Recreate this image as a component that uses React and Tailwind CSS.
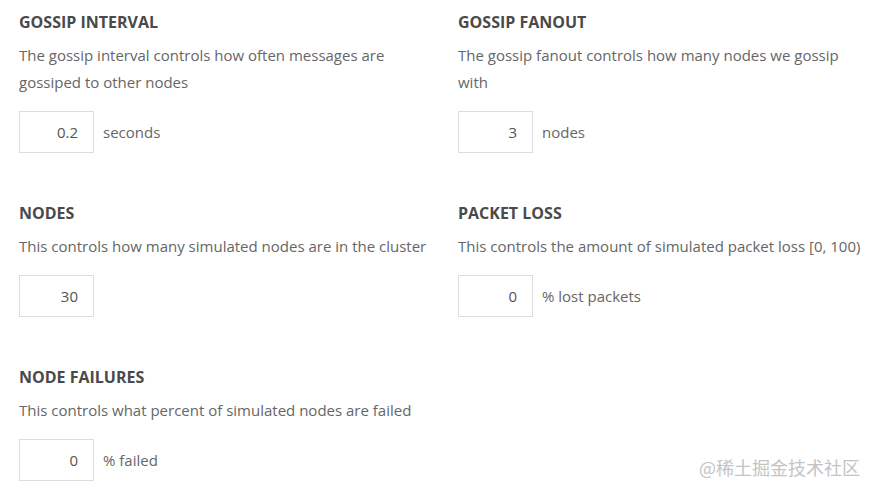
const settings = [
  [
    {
      title: "GOSSIP INTERVAL",
      desc: "The gossip interval controls how often messages are gossiped to other nodes",
      value: "0.2",
      unit: "seconds",
    },
    {
      title: "GOSSIP FANOUT",
      desc: "The gossip fanout controls how many nodes we gossip with",
      value: "3",
      unit: "nodes",
    },
  ],
  [
    {
      title: "NODES",
      desc: "This controls how many simulated nodes are in the cluster",
      value: "30",
      unit: "",
    },
    {
      title: "PACKET LOSS",
      desc: "This controls the amount of simulated packet loss [0, 100)",
      value: "0",
      unit: "% lost packets",
    },
  ],
  [
    {
      title: "NODE FAILURES",
      desc: "This controls what percent of simulated nodes are failed",
      value: "0",
      unit: "% failed",
    },
  ],
];

function Setting({ title, desc, value, unit }) {
  return (
    <div className="w-[439px] shrink-0 pr-[30px]">
      <h3 className="text-[16px] leading-[24px] font-bold text-[#4a4a4a] font-['Open_Sans',sans-serif]">
        {title}
      </h3>
      <p className="mt-[8px] text-[15px] leading-[27px] text-[#666]">{desc}</p>
      <div className="mt-[15px] flex items-center gap-[9px]">
        <div className="w-[75px] h-[42px] border border-[#ddd] flex items-center justify-end pr-[15px] text-[15px] text-[#555]">
          {value}
        </div>
        {unit && <span className="text-[15px] text-[#666]">{unit}</span>}
      </div>
    </div>
  );
}

export default function App() {
  return (
    <div className="relative w-[875px] h-[496px] bg-white pl-[19px] pt-[10px] font-['Open_Sans',sans-serif] overflow-hidden">
      <div className="flex flex-col gap-[48px]">
        {settings.map((row, i) => (
          <div key={i} className="flex">
            {row.map((s) => (
              <Setting key={s.title} {...s} />
            ))}
          </div>
        ))}
      </div>
      <div className="absolute right-[15px] bottom-[15px] text-[18px] text-[#c4c4c4] font-['Noto_Sans_CJK_SC',sans-serif]">
        @稀土掘金技术社区
      </div>
    </div>
  );
}
